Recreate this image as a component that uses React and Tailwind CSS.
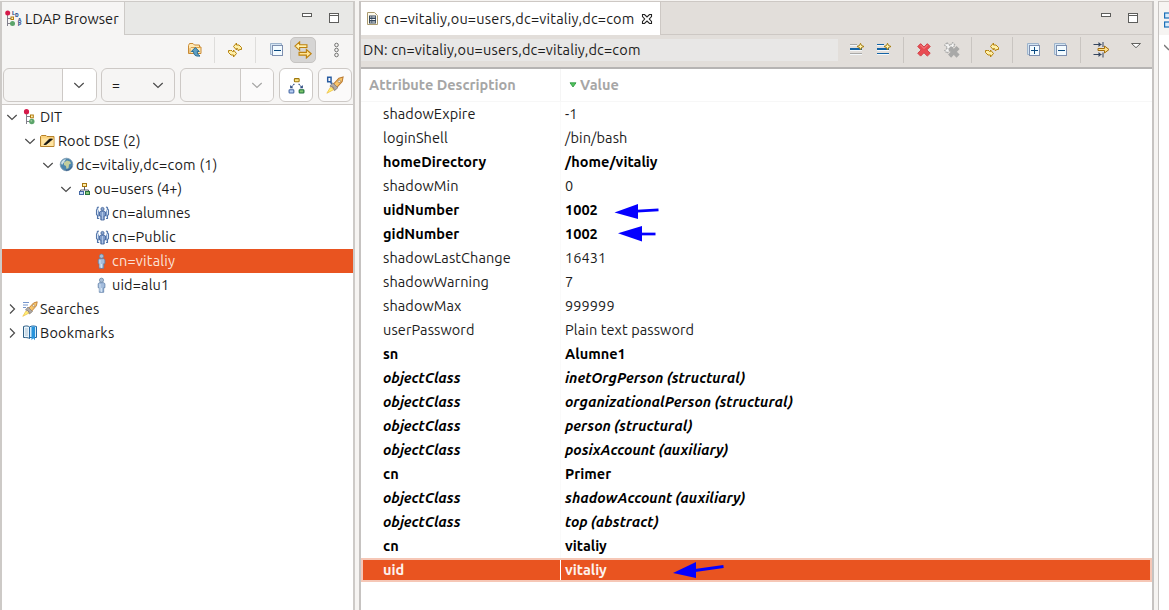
import React from "react";

const Svg = ({ children, className = "" }) => (
  <svg viewBox="0 0 16 16" className={"block h-4 w-4 shrink-0 " + className} fill="none">
    {children}
  </svg>
);

const Minimize = () => (
  <Svg>
    <rect x="3.5" y="3.5" width="9" height="3" fill="#fff" stroke="#5d5d5b" />
  </Svg>
);
const Maximize = () => (
  <Svg>
    <rect x="3.5" y="3.5" width="9" height="9" fill="#fff" stroke="#5d5d5b" />
    <path d="M3 5.5h10" stroke="#5d5d5b" />
  </Svg>
);
const Refresh = () => (
  <Svg>
    <path
      d="M6.5 4.5L9.500 1V3H12L14.500 5.500V7.500H12.500L11.500 9 10.500 6.500H9.500V8z"
      fill="#fff0a8" stroke="#b5820f" strokeLinejoin="round"
    />
    <path
      d="M9.500 11.500L6.500 15V13H4L1.500 10.500V8.500H3.500L4 8 5.500 9.500H6.500V8z"
      fill="#fff0a8" stroke="#b5820f" strokeLinejoin="round"
    />
  </Svg>
);
const BoxIcon = ({ plus }) => (
  <Svg>
    <path d="M1.5 12.5v-11h11v2h-9v9z" fill="#d3e4f2" stroke="#9db3cb" />
    <rect x="3.5" y="3.5" width="10" height="10" fill="#f3fbff" stroke="#7e8faf" />
    <path d={plus ? "M5 8.5h7M8.5 5v7" : "M5 8.5h7"} stroke="#0b4a80" />
  </Svg>
);
const FolderUp = () => (
  <Svg>
    <path d="M1.500 11.500v-8l1-2h3.500l1.500 1.500h5V5H14v6.500z" fill="#ffe9b5" stroke="#c98a35" />
    <path d="M3 11V6.500l1-1h10" stroke="#d9a04c" />
    <path d="M8.300 5.500l4 4h-2c0 2 .8 3.500 2.700 4.500-4.300.6-6.500-1-6.500-4.500H4.300z" fill="#5f9fc2" stroke="#256993" strokeLinejoin="round" />
  </Svg>
);
const LinkArrows = () => (
  <Svg className="!h-[18px] !w-[18px]">
    <path d="M.8 4.500L5 .8v2.500h6.500v2.500H5v2.500z" fill="#fff0ae" stroke="#bd810d" />
    <path d="M15.300 11.300L11 7.600v2.500H4.500v2.500H11v2.500z" fill="#ffe496" stroke="#bd810d" />
  </Svg>
);
const Dots = () => (
  <Svg>
    <circle cx="8.500" cy="3" r="1.800" stroke="#747472" />
    <circle cx="8.500" cy="8" r="1.800" stroke="#747472" />
    <circle cx="8.500" cy="13" r="1.800" stroke="#747472" />
  </Svg>
);
const AddValue = ({ all }) => (
  <Svg>
    <path d="M1 2.500h7M1 11.500h12" stroke={all ? "#1464a5" : "#a9a9a8"} />
    <path d="M1 7h12" stroke="#1464a5" strokeWidth="2" />
    <path d="M1 3.500h7M1 8.500h12M1 12.500h12" stroke="#f4f8fb" />
    <path d="M11.500 1.300l1 2.200 2.500 1-2.500 1-1 2.300-1-2.300-2.500-1 2.500-1z" fill="#fffbd6" stroke="#a77c0b" />
    <path d="M11.500 3v3M10 4.500h3" stroke="#fff6b0" />
  </Svg>
);
const CROSS = "M4.500 1.500L8 5l3.500-3.500 3 3L11 8l3.500 3.500-3 3L8 11l-3.500 3.500-3-3L5 8 1.500 4.500z";
const Delete = () => (
  <Svg>
    <path transform="translate(.3 .2) scale(.96)" d={CROSS} fill="#e94b52" stroke="#cf3f45" strokeLinejoin="round" />
    <path d="M4.500 3l3.500 3.500L11.500 3" stroke="#f58c8d" />
  </Svg>
);
const DeleteAll = () => (
  <Svg>
    <path transform="translate(-.5 -.5) scale(.8)" d={CROSS} fill="#f4f4f3" stroke="#a9a9a8" strokeWidth="1.500" strokeDasharray="2 1" />
    <path transform="translate(3.600 3.600) scale(.78)" d={CROSS} fill="#a9a9a8" stroke="#a9a9a8" strokeWidth="1.300" />
  </Svg>
);
const FilterArrows = () => (
  <Svg className="!w-[17px]">
    <path d="M0 2.500h8M0 12.500h8" stroke="#35455f" />
    <path d="M5 0l3 2.500L5 5zM5 10l3 2.500L5 15z" fill="#35455f" />
    <path d="M9.500 0v5M9.500 10.500v5" stroke="#35455f" />
    <path d="M4.500 6.500h6.500V4L15.500 7.500 11 11V8.500H4.500z" fill="#ffe28c" stroke="#a46d0b" />
  </Svg>
);
const ViewMenu = () => (
  <Svg>
    <path d="M3.500 1.500h9L8 5.700z" fill="#fff" stroke="#62625f" />
  </Svg>
);
const Rocket = ({ mark }) => (
  <Svg className={mark ? "!h-[18px] !w-[18px]" : ""}>
    <path d="M4 10L.8 15.300 7 12z" fill="#fff375" stroke="#efc34e" strokeWidth=".8" />
    <path d="M5 9L11.500 2l3.700-1.200-.8 4L8 12z" fill="#f8c469" stroke="#bc7d35" strokeWidth=".9" />
    <path d="M6 6L3.500 9l3 1 1 3L10.500 10.500z" fill="#b1aaa4" stroke="#827d79" strokeWidth=".7" />
    <circle cx="11.700" cy="4.700" r="1.100" fill="#fff" stroke="#96713f" strokeWidth=".6" />
    {mark ? (
      <path d="M1.500 1.200h3v4h-3zM4 5l1 2" stroke="#285ca1" strokeWidth="1.300" />
    ) : (
      <path d="M1 1.500h6M1 4h5M1 6.500h3" stroke="#7696cc" />
    )}
  </Svg>
);
const HierarchyArrows = () => (
  <Svg className="!h-[17px] !w-[17px]">
    <rect x="6" y="1.500" width="4.500" height="3" rx=".7" fill="#ffe78b" stroke="#9e770b" />
    <path d="M6 6.500l-3 3M10 6.500l3 3" stroke="#314f85" strokeDasharray="1.500 .8" />
    <path d="M2 7.500v3h3zM14 7.500v3h-3z" fill="#314f85" />
    <rect x="1" y="12" width="4.500" height="3" rx=".7" fill="#b9d0f4" stroke="#4466a3" />
    <rect x="10.500" y="12" width="4.500" height="3" rx=".7" fill="#7cc46c" stroke="#176c37" />
  </Svg>
);
const Dit = () => (
  <Svg>
    <path d="M4.500 3v12M5 7.500h5M5 12.500h4" stroke="#817f8b" />
    <circle cx="4.500" cy="2.700" r="2.600" fill="#d51a4a" />
    <rect x="8.500" y="6" width="2.800" height="2.800" fill="#fff3bc" stroke="#b27b0d" />
    <circle cx="9.800" cy="12.500" r="2.700" fill="#5ba46a" />
    <circle cx="9.300" cy="11.800" r=".9" fill="#9dcb9e" />
  </Svg>
);
const LdapLogo = () => (
  <svg viewBox="0 0 17 17" className="block h-[17px] w-[17px] shrink-0 overflow-visible" fill="none">
    <path d="M2.500 4v12M3 8.500h3M3 13.500h3" stroke="#817f8b" />
    <circle cx="2.700" cy="3" r="2.500" fill="#d51a4a" />
    <rect x="6" y="7" width="2.500" height="2.500" fill="#fff3bc" stroke="#b27b0d" />
    <circle cx="7.500" cy="13.500" r="2.500" fill="#5ba46a" />
    <g fill="#1c4b89" className="font-['Liberation_Mono'] text-[6px] font-bold">
      <text x="6.800" y="4.500">L</text>
      <text x="10" y="7">D</text>
      <text x="12.800" y="11.500">A</text>
      <text x="12.800" y="16">P</text>
    </g>
  </svg>
);
const RootFolder = () => (
  <Svg>
    <path d="M.5 13.500v-10l1-1h4.500l1 1h7v10z" fill="#fbd27d" stroke="#b68129" />
    <path d="M1.500 5.500h12V13h-12z" fill="#ffe4a1" />
    <path d="M4 11.500l5.500-5.500H12.500L10.500 8 6 11.500z" fill="#111" stroke="#111" strokeWidth=".8" />
  </Svg>
);
const Globe = () => (
  <Svg>
    <circle cx="8.500" cy="7.500" r="6.300" fill="#4d86ad" stroke="#7e9aae" strokeWidth=".8" />
    <path d="M6 5.500l3-2 3 1 1 2-2 1-.5 3.500L8.500 12 8 9 6 8z" fill="#c3cd9d" />
    <path d="M3 6c1-2.500 3-4 5-3.700L5.500 6 4 8z" fill="#cfe0e6" />
    <path d="M13.700 9.500c-1 3-4 4-6 3.700" stroke="#33588a" />
  </Svg>
);
const OrgUnit = () => (
  <Svg>
    <path d="M8.500 6v3M4.500 11V9h8v2" stroke="#5c5e6d" />
    <rect x="6.500" y="2.500" width="4" height="3" fill="#ffeda7" stroke="#a77610" />
    <rect x="3.500" y="10.500" width="4" height="3" fill="#c8dbfa" stroke="#466aa6" />
    <rect x="9.500" y="10.500" width="4" height="3" fill="#88c778" stroke="#28743f" />
  </Svg>
);
const Person = () => (
  <Svg>
    <circle cx="7.500" cy="3.200" r="2.100" fill="#a9bdd6" stroke="#64839f" strokeWidth=".7" />
    <path d="M5.300 5.700h4.400l1.200 1v4H9.700v4.600H5.300v-4.600H4.200v-4z" fill="#a4bddd" stroke="#607fa7" strokeWidth=".8" />
    <path d="M6 7v7.500M7.500 11v4" stroke="#e0ecf8" strokeWidth=".8" />
  </Svg>
);
const Group = () => (
  <Svg>
    <path d="M4.800 2.500c-1-.8-2 .2-1.500 1.500L2.500 5v4.500l1 1v3h1.700M12 2.500c1-.8 2 .2 1.500 1.500l1 1v4.500l-1 1v3H12" fill="#dce7f5" stroke="#5476aa" strokeWidth="1.100" />
    <path d="M4.500 5.500v6M12.500 5.500v6" stroke="#7d9bc8" />
    <circle cx="8.500" cy="4" r="1.600" fill="#8ca6d0" stroke="#3e5f96" strokeWidth=".8" />
    <path d="M7 6h3l1.500 1v4h-1.300v4H6.800v-4H5.500V7z" fill="#7f9cca" stroke="#385b96" strokeWidth=".8" />
    <path d="M8.500 7v7.500" stroke="#bed0ec" strokeWidth=".8" />
  </Svg>
);
const Book = () => (
  <Svg>
    <path d="M1.500 12.500V1.500c2.500-.8 4.500-.8 6 .5v11.500c-1.500-1-3.500-1-6-1z" fill="#e8f4fc" stroke="#2f5f85" />
    <path d="M7.500 13.500V2c2-1.300 4-1.300 7-.5v11H8" fill="#d1eafa" stroke="#2468a2" />
    <path d="M9.500 1.500H13v13.800l-1.800-2-1.700 2z" fill="#2894dc" />
    <path d="M3 4h3M3 6h3M3 8h3M3 10h3" stroke="#9aaebd" strokeWidth=".7" />
  </Svg>
);
const EntryDoc = () => (
  <Svg>
    <path d="M3.500 1.500h7l3 3v9h-10z" fill="#fffbed" stroke="#aa9b70" />
    <rect x="5" y="4.500" width="7" height="8" fill="#34475c" />
    <path d="M6 6h1.500M8.200 6h3M6 8.500h1.500M8.200 8.500h3M6 11h1.500M8.200 11h3" stroke="#fff" />
  </Svg>
);
const CloseTab = () => (
  <Svg>
    <path
      d="M3.500 3.500h2L8 6l2.500-2.500h2v2L10.300 8l2.200 2.500v2h-2L8 10l-2.500 2.500h-2v-2L5.700 8 3.500 5.500z"
      fill="#fff" stroke="#222" strokeWidth="1.100"
    />
  </Svg>
);
const Chevron = ({ right, color = "#4b4b4b", className = "" }) => (
  <Svg className={className}>
    <path d={right ? "M6 3.500L10.500 8 6 12.500" : "M3.300 6L8 10.500 12.700 6"} stroke={color} strokeWidth="1.200" />
  </Svg>
);

const Sep = ({ className = "", dark }) => (
  <div className={(dark ? "bg-[#c9c5c1] " : "bg-[#dedddb] ") + "h-[26px] w-px shrink-0 " + className} />
);

const TREE = [
  { label: "DIT", icon: Dit, pad: "pl-0.5", open: true, track: "" },
  { label: "Root DSE (2)", icon: RootFolder, pad: "pl-5", open: true, track: "tracking-[0.09px]" },
  { label: "dc=vitaliy,dc=com (1)", icon: Globe, pad: "pl-[38px]", open: true, track: "tracking-[0.24px]" },
  { label: "ou=users (4+)", icon: OrgUnit, pad: "pl-14", open: true, track: "" },
  { label: "cn=alumnes", icon: Group, pad: "pl-[74px]", leaf: true, track: "tracking-[0.06px]" },
  { label: "cn=Public", icon: Group, pad: "pl-[74px]", leaf: true, track: "tracking-[0.12px]" },
  { label: "cn=vitaliy", icon: Person, pad: "pl-[74px]", leaf: true, selected: true, track: "tracking-[0.2px]" },
  { label: "uid=alu1", icon: Person, pad: "pl-[74px]", leaf: true, track: "tracking-[0.15px]" },
  { label: "Searches", icon: Rocket, pad: "pl-0.5", track: "tracking-[0.2px]" },
  { label: "Bookmarks", icon: Book, pad: "pl-0.5", track: "tracking-[0.2px]" },
];

const ROWS = [
  ["shadowExpire", "-1", "n"],
  ["loginShell", "/bin/bash", "n"],
  ["homeDirectory", "/home/vitaliy", "b"],
  ["shadowMin", "0", "n"],
  ["uidNumber", "1002", "b"],
  ["gidNumber", "1002", "b"],
  ["shadowLastChange", "16431", "n"],
  ["shadowWarning", "7", "n"],
  ["shadowMax", "999999", "n"],
  ["userPassword", "Plain text password", "n"],
  ["sn", "Alumne1", "b"],
  ["objectClass", "inetOrgPerson (structural)", "i"],
  ["objectClass", "organizationalPerson (structural)", "i"],
  ["objectClass", "person (structural)", "i"],
  ["objectClass", "posixAccount (auxiliary)", "i"],
  ["cn", "Primer", "b"],
  ["objectClass", "shadowAccount (auxiliary)", "i"],
  ["objectClass", "top (abstract)", "i"],
  ["cn", "vitaliy", "b"],
];
const ROW_STYLE = {
  n: "tracking-[0.1px]",
  b: "font-bold tracking-[0.03px] text-black",
  i: "font-bold italic tracking-[0.02px] text-black",
};

function Browser() {
  return (
    <section className="flex w-[355px] shrink-0 flex-col border-r-2 border-l-2 border-[#cdcac7] bg-[#f6f5f4]">
      <div className="flex h-[34px] border-t border-b border-[#cdcac7] bg-[#e8e8e6]">
        <div className="-mb-px flex w-[123px] items-center border-r border-[#cdcac7] bg-[#f6f5f4] pl-[3px]">
          <LdapLogo />
          <span className="ml-[3px] tracking-[0.05px]">LDAP Browser</span>
        </div>
        <div className="ml-auto flex gap-[11px] pt-2 pr-[11px]">
          <Minimize />
          <Maximize />
        </div>
      </div>
      <div className="flex h-[30px] items-center">
        <div className="ml-[185px]"><FolderUp /></div>
        <Sep className="ml-[11px]" />
        <div className="ml-3"><Refresh /></div>
        <Sep className="ml-3" />
        <div className="ml-[13px]"><BoxIcon /></div>
        <div className="ml-[5px] flex h-[26px] w-[26px] items-center justify-center rounded-[5px] border border-[#c6c4c2] bg-[#d6d5d4]">
          <LinkArrows />
        </div>
        <div className="ml-3"><Dots /></div>
      </div>
      <div className="flex h-[39px] pt-[3px] pl-px">
        <div className="flex h-[34px] w-[94px] overflow-hidden rounded-md border border-[#cdc9c6]">
          <div className="w-[59px] border-r border-[#cdc9c6]" />
          <div className="flex flex-1 items-center justify-center bg-white pr-0.5"><Chevron /></div>
        </div>
        <div className="ml-1 flex h-[34px] w-[74px] items-center justify-between rounded-md border border-[#cdc9c6] pr-2 pl-2.5">
          <span className="text-[14px]">=</span>
          <Chevron />
        </div>
        <div className="ml-[5px] flex h-[34px] w-[94px] overflow-hidden rounded-md border border-[#cdc9c6]">
          <div className="w-[60px] border-r border-[#cdc9c6]" />
          <div className="flex flex-1 items-center justify-center bg-[#fbfafa]"><Chevron color="#a5a5a4" /></div>
        </div>
        <div className="ml-[5px] flex h-[34px] w-[34px] items-center justify-center rounded-md border border-[#cdc9c6] bg-white">
          <HierarchyArrows />
        </div>
        <div className="ml-[5px] flex h-[34px] w-[34px] items-center justify-center rounded-md border border-[#cdc9c6] bg-[#fbfafa]">
          <Rocket mark />
        </div>
      </div>
      <div className="flex-1 border-t border-[#cdc9c6] bg-white">
        {TREE.map(({ label, icon: Icon, pad, open, leaf, selected, track }) => (
          <div key={label} className={`flex h-6 items-center ${pad} ${selected ? "bg-[#e95420] text-[#fbe3da]" : ""}`}>
            {leaf ? <div className="w-4" /> : <Chevron right={!open} />}
            <div className="ml-0.5"><Icon /></div>
            <span className={"ml-0.5 " + track}>{label}</span>
          </div>
        ))}
      </div>
    </section>
  );
}

function Editor() {
  return (
    <section className="relative ml-1 flex w-[795px] shrink-0 flex-col border-r-2 border-l-2 border-[#c6c3c1] bg-[#e2deda]">
      <div className="flex h-[34px] border-t border-b border-[#cdc8c4]">
        <div className="-mb-px flex w-[300px] items-center border-r border-[#cdc8c4] bg-white pl-[3px]">
          <EntryDoc />
          <span className="ml-1 w-[252px] tracking-[0.2px]">cn=vitaliy,ou=users,dc=vitaliy,dc=com</span>
          <div className="ml-[3px]"><CloseTab /></div>
        </div>
        <div className="ml-auto flex gap-[11px] pt-2 pr-[11px]">
          <Minimize />
          <Maximize />
        </div>
      </div>
      <div className="flex h-[34px] items-center border-b-2 border-[#b6b4b3] pb-0.5">
        <div className="flex h-[22px] w-[477px] items-center bg-[#e8e7e6] pl-0.5 tracking-[0.17px]">DN: cn=vitaliy,ou=users,dc=vitaliy,dc=com</div>
        <div className="ml-[11px]"><AddValue /></div>
        <div className="ml-[11px]"><AddValue all /></div>
        <Sep dark className="ml-[11px]" />
        <div className="ml-[12px]"><Delete /></div>
        <div className="ml-[12px]"><DeleteAll /></div>
        <Sep dark className="ml-[11px]" />
        <div className="ml-[12px]"><Refresh /></div>
        <Sep dark className="ml-[12px]" />
        <div className="ml-[13px]"><BoxIcon plus /></div>
        <div className="ml-[11px]"><BoxIcon /></div>
        <Sep dark className="ml-[11px]" />
        <div className="ml-[12px]"><FilterArrows /></div>
        <div className="ml-[18px]"><ViewMenu /></div>
      </div>
      <div className="flex flex-1 flex-col bg-white">
        <div className="flex h-[33px] border-b border-[#f7f7f7] font-bold text-[#a6a6a6]">
          <div className="flex w-[200px] items-center border-r border-[#f5f5f5] pl-2">Attribute Description</div>
          <div className="flex items-center pl-2">
            <svg viewBox="0 0 8 6" className="mr-[3px] block h-1.5 w-2">
              <path d="M1 .8h6L4 5z" fill="#52c45e" stroke="#259338" strokeWidth=".8" />
            </svg>
            Value
          </div>
        </div>
        {ROWS.map(([name, value, kind], i) => (
          <div key={i} className={"flex h-6 items-center " + ROW_STYLE[kind]}>
            <div className="flex h-6 w-[200px] items-center border-r border-[#fafafa] pl-[22px]">{name}</div>
            <div className="pl-1">{value}</div>
          </div>
        ))}
        <div className="flex h-6 border-2 border-[#f6c7b6] bg-[#e95420] font-bold tracking-[0.03px] text-[#fdf2ee]">
          <div className="flex w-[198px] items-center border-r border-white pl-5">uid</div>
          <div className="flex items-center pl-1">vitaliy</div>
        </div>
      </div>
      <svg viewBox="0 0 120 400" className="pointer-events-none absolute top-[194px] left-[249px] h-[400px] w-[120px]" fill="#0500ff" stroke="#0500ff">
        <path d="M4.500 17.500L28 9v15z" stroke="none" />
        <path d="M27 16.200l21.500-1.400" strokeWidth="2.700" />
        <path d="M8 38.300L32 31v15.500z" stroke="none" />
        <path d="M31 39h14.500" strokeWidth="2.700" />
        <path d="M63 378l23-11v16z" stroke="none" />
        <path d="M85 375.500l28.500-4" strokeWidth="3" />
      </svg>
    </section>
  );
}

export default function App() {
  return (
    <main className="flex h-[610px] w-[1169px] overflow-hidden bg-[#f6f4f2] pt-px font-['Ubuntu','Noto_Sans',sans-serif] text-[14.5px] leading-6 whitespace-nowrap text-[#1c1c1c]">
      <Browser />
      <Editor />
      <aside className="ml-1 flex min-w-0 flex-1 flex-col border-l border-[#c6c3c1]">
        <div className="h-[34px] border-t border-[#cdc8c4] pt-[9px] pl-[5px]">
          <svg viewBox="0 0 10 18" className="block h-[18px] w-2.5" fill="#d8ecfc" stroke="#1a6fb8" strokeWidth="1.200">
            <rect x=".6" y="2" width="12" height="5" />
            <rect x=".6" y="11" width="12" height="5" />
          </svg>
        </div>
        <div className="flex-1 bg-white pt-2 pl-[5px]">
          <svg viewBox="0 0 8 8" className="block h-2 w-2" fill="none"><path d="M0 2l5 5" stroke="#777" strokeWidth="1.500" /></svg>
        </div>
      </aside>
    </main>
  );
}
